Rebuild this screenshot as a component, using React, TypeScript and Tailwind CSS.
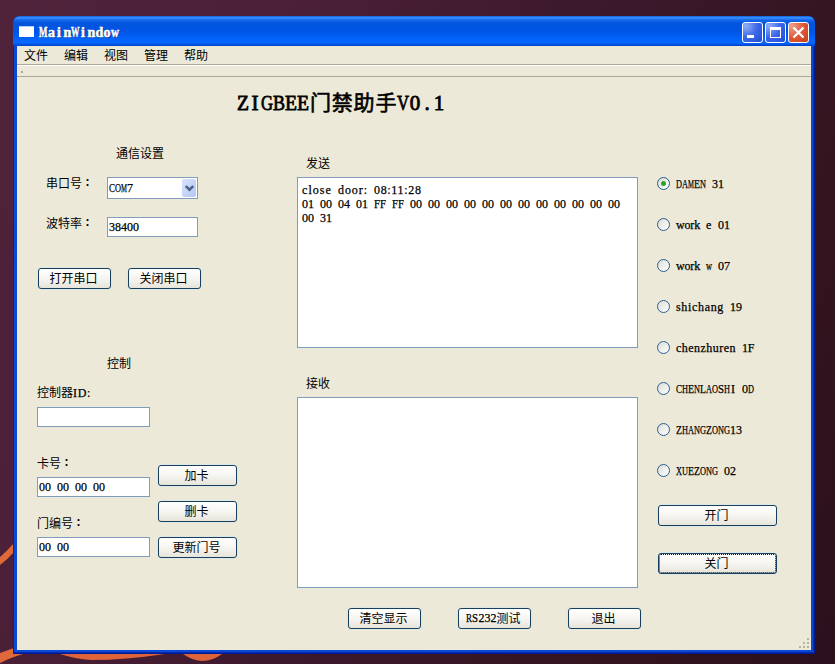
import React, { Fragment } from "react";

const SONG = "font-['Noto_Sans_CJK_SC',sans-serif]";

// Advance widths of the serif face, in em.
const ADVANCE: Record<string, number> = {
  A: 0.722, B: 0.667, C: 0.667, D: 0.722, E: 0.611, F: 0.556, G: 0.722, H: 0.722, I: 0.333, L: 0.611,
  M: 0.889, N: 0.722, O: 0.722, R: 0.667, S: 0.556, U: 0.722, V: 0.722, W: 0.944, X: 0.722, Z: 0.611,
  a: 0.444, c: 0.444, e: 0.444, g: 0.5, i: 0.278, l: 0.278, r: 0.333, s: 0.389, w: 0.722, z: 0.444,
  ":": 0.278, ".": 0.25,
};

// Letters on a fixed grid; wide ones are condensed, narrow ones centred.
function Cells({ text, cell, size }: { text: string; cell: number; size: number }) {
  return (
    <>
      {[...text].map((ch, i) => {
        const natural = (ADVANCE[ch] ?? 0.5) * size;
        const scale = Math.min(1, cell / natural);
        return (
          <span
            key={i}
            className="inline-block origin-left whitespace-nowrap"
            style={{
              width: cell,
              transform: scale < 1 ? `scaleX(${scale})` : undefined,
              textIndent: scale < 1 ? 0 : (cell - natural) / 2,
            }}
          >
            {ch}
          </span>
        );
      })}
    </>
  );
}

// A word whose letters share one 6px grid.
function Word({ text }: { text: string }) {
  const natural = [...text].reduce((sum, ch) => sum + (ADVANCE[ch] ?? 0.5) * 12, 0);
  const target = text.length * 6;
  if (natural > target + 0.8) return <Cells text={text} cell={6} size={12} />;
  return (
    <span
      className="inline-block whitespace-nowrap"
      style={{ width: target, letterSpacing: (target - natural) / text.length }}
    >
      {text}
    </span>
  );
}

function Latin({ text }: { text: string }) {
  return (
    <span className="font-['Liberation_Serif',serif] text-[12px] [-webkit-text-stroke:0.25px_black] [word-spacing:3px]">
      {text.split(" ").map((w, i) => (
        <Fragment key={i}>
          {i > 0 && " "}
          <Word text={w} />
        </Fragment>
      ))}
    </span>
  );
}

function Label({ children, colon, className = "" }: { children: React.ReactNode; colon?: boolean; className?: string }) {
  return (
    <div className={`flex h-5 items-center whitespace-nowrap pb-px leading-[19px] ${className}`}>
      <span>{children}</span>
      {colon && <span className="font-['Noto_Sans_CJK_TC',sans-serif] text-[11px] font-bold">：</span>}
    </div>
  );
}

function Button({ children, className, focused }: { children: React.ReactNode; className: string; focused?: boolean }) {
  return (
    <button
      className={`flex h-[21px] shrink-0 items-center justify-center whitespace-nowrap rounded-[3px] border border-[#17405f] bg-gradient-to-b from-white via-[#f6f5f1] to-[#e6e4da] pb-px pr-[2px] leading-[18px] shadow-[0_0_0_1px_#dfe7e3] ${className}`}
    >
      {children}
      {focused && (
        <span className="pointer-events-none absolute inset-0 rounded-[2px] border border-dotted border-[#07203c]" />
      )}
    </button>
  );
}

function Field({ text, className }: { text: string; className: string }) {
  return (
    <div className={`flex h-5 items-center border border-[#7f9db9] bg-white pl-px leading-[18px] ${className}`}>
      <Latin text={text} />
    </div>
  );
}

function Radio({ text, checked }: { text: string; checked?: boolean }) {
  return (
    <div className="flex h-[41px] items-center">
      <span className="flex size-[13px] items-center justify-center rounded-full border border-[#2f5f8b] bg-gradient-to-br from-[#dcdcd6] to-white">
        {checked && <span className="size-[5px] rounded-full bg-[#2ba528]" />}
      </span>
      <span className="ml-[6px] leading-4">
        <Latin text={text} />
      </span>
    </div>
  );
}

const CAPTION = "size-[21px] shrink-0 rounded-[3px] border border-white";

function TitleBar() {
  return (
    <div className="flex h-[30px] items-center rounded-t-[7px] bg-[linear-gradient(#0a5fe0_0%,#3c93ff_6%,#1468ea_13%,#0355dd_24%,#0054e3_50%,#0262fb_75%,#0468ff_88%,#0050df_96%,#003fc2_100%)] pl-[6px] pr-[6px]">
      <div className="h-[11px] w-[15px] border-t border-[#a9d4ec] bg-white" />
      <span className="ml-[5px] mt-[3px] whitespace-nowrap font-['Liberation_Serif',serif] text-[14px] font-bold leading-4 text-white [-webkit-text-stroke:0.5px_white] [text-shadow:1px_1px_#0a2a80]">
        <Cells text="MainWindow" cell={8} size={14} />
      </span>
      <div className="ml-auto mt-[3px] flex gap-[2px]">
        <svg className={`${CAPTION} bg-[radial-gradient(circle_at_15%_15%,#93aef6,#3c68e8_50%,#1c4bd8)]`} viewBox="0 0 19 19">
          <rect x="4" y="12" width="7" height="3" fill="#fff" />
        </svg>
        <svg className={`${CAPTION} bg-[radial-gradient(circle_at_15%_15%,#93aef6,#3c68e8_50%,#1c4bd8)]`} viewBox="0 0 19 19">
          <path d="M4 4h11v11H4zM5 7v7h9V7z" fill="#fff" fillRule="evenodd" />
        </svg>
        <svg className={`${CAPTION} bg-[radial-gradient(circle_at_15%_15%,#f0a18c,#e05a37_50%,#c93b13)]`} viewBox="0 0 19 19">
          <path d="M4.5 4.5l10 10M14.5 4.5l-10 10" stroke="#fff" strokeWidth="2.3" />
        </svg>
      </div>
    </div>
  );
}

function SettingsPanel() {
  return (
    <div className="w-[280px] shrink-0 pl-5 pt-[14px]">
      <Label className="pl-[79px]">通信设置</Label>
      <div className="mt-[10px] flex h-[30px] items-start">
        <Label colon className="w-[70px] pl-[9px]">串口号</Label>
        <div className="mt-[4px] flex h-[22px] w-[91px] items-center justify-between border border-[#7f9db9] bg-white pl-px pr-px leading-5">
          <Latin text="COM7" />
          <span className="flex h-[18px] w-[14px] items-center justify-center rounded-[2px] bg-gradient-to-br from-[#d8e3fe] to-[#b3c6f5]">
            <svg className="h-[7px] w-[9px]" viewBox="0 0 9 7">
              <path d="M0.8 1l3.7 3.7L8.2 1" fill="none" stroke="#4d6185" strokeWidth="2.4" />
            </svg>
          </span>
        </div>
      </div>
      <div className="mt-[10px] flex h-[24px] items-start">
        <Label colon className="w-[70px] pl-[9px]">波特率</Label>
        <Field text="38400" className="mt-[4px] w-[91px]" />
      </div>
      <div className="mt-[31px] flex gap-[17px] pl-px">
        <Button className="w-[73px]">打开串口</Button>
        <Button className="w-[73px]">关闭串口</Button>
      </div>
      <Label className="mt-[64px] pl-[70px]">控制</Label>
      <Label className="mt-[10px]">
        控制器<Latin text="ID:" />
      </Label>
      <Field text="" className="mt-[4px] w-[113px]" />
      <div className="mt-[26px] flex gap-2">
        <div className="w-[113px]">
          <Label colon>卡号</Label>
          <Field text="00 00 00 00" className="mt-[4px]" />
          <Label colon className="mt-4">门编号</Label>
          <Field text="00 00" className="mt-[4px]" />
        </div>
        <div className="flex flex-col gap-[15px] pt-3">
          <Button className="w-[79px]">加卡</Button>
          <Button className="w-[79px]">删卡</Button>
          <Button className="w-[79px]">更新门号</Button>
        </div>
      </div>
    </div>
  );
}

function LogPanel() {
  return (
    <div className="w-[341px] shrink-0 pt-[24px]">
      <Label className="pl-[9px]">发送</Label>
      <div className="mt-[4px] h-[171px] border border-[#7f9db9] bg-white pl-[4px] pt-[4px] leading-[14px]">
        {["close door: 08:11:28", "01 00 04 01 FF FF 00 00 00 00 00 00 00 00 00 00 00 00", "00 31"].map((line) => (
          <div key={line} className="h-[14px] whitespace-nowrap">
            <Latin text={line} />
          </div>
        ))}
      </div>
      <Label className="mt-[25px] pl-[9px]">接收</Label>
      <div className="mt-[4px] h-[191px] border border-[#7f9db9] bg-white" />
      <div className="mt-5 flex gap-[37px] pl-[51px]">
        <Button className="w-[73px]">清空显示</Button>
        <Button className="w-[73px]">
          <Latin text="RS232" />
          测试
        </Button>
        <Button className="w-[73px]">退出</Button>
      </div>
    </div>
  );
}

const DOORS = ["DAMEN 31", "work e 01", "work w 07", "shichang 19", "chenzhuren 1F", "CHENLAOSHI 0D", "ZHANGZONG13", "XUEZONG 02"];

function DoorPanel() {
  return (
    <div className="ml-[19px] w-[140px] pt-[34px]">
      {DOORS.map((door, i) => (
        <Radio key={door} text={door} checked={i === 0} />
      ))}
      <Button className="ml-px mt-[14px] w-[119px]">开门</Button>
      <Button className="relative ml-px mt-[27px] w-[119px]" focused>
        关门
      </Button>
    </div>
  );
}

export default function App() {
  return (
    <div className={`relative h-[664px] w-[835px] overflow-hidden bg-[linear-gradient(115deg,#50233b_0%,#4b2038_25%,#3b182b_55%,#34141f_80%,#2a101d_100%)] pl-[13px] pt-4 text-[12px] text-black ${SONG}`}>
      <svg className="absolute left-0 top-0" width="835" height="664" viewBox="0 0 835 664">
        <path d="M0 557Q7 551 14 543V552Q7 560 0 565Z" fill="#e0693a" />
        <path d="M0 653L14 648V653H27Q14 656 0 663Z" fill="#e0683a" />
        <path d="M60 654Q75 659 91 660Q125 660 165 654Z" fill="#df633a" />
        <path d="M183 654Q203 668 222 654Z" fill="#df633a" />
      </svg>
      <div className="relative h-[638px] w-[802px] rounded-t-[7px] bg-[#0a49d6] shadow-[inset_1px_0_#0a1fae,inset_-1px_0_#001a86,inset_-2px_0_#0630bb,inset_0_-1px_#001a90,inset_0_-2px_#0628b4]">
        <TitleBar />
        <div className="mx-[4px] h-[604px] bg-[#ece9d8]">
          <div className="flex h-[18px] items-center gap-4 pb-px pl-[7px] leading-[17px]">
            {["文件", "编辑", "视图", "管理", "帮助"].map((m) => (
              <span key={m}>{m}</span>
            ))}
          </div>
          <div className="flex h-[13px] items-center border-y border-[#aca899] pl-[4px] shadow-[inset_0_1px_white]">
            <span className="mt-[3px] size-[2px] bg-[#aca899]" />
          </div>
          <h1 className="flex h-[52px] items-center whitespace-nowrap pb-[2px] pl-[220px] text-[21px] leading-[50px]">
            <span className="w-[73px] pt-[2px] font-['Liberation_Serif',serif] [-webkit-text-stroke:0.8px_black]">
              <Cells text="ZIGBEE" cell={12} size={21} />
            </span>
            <span className="w-[87px] pb-[2px] font-normal tracking-[0.8px] [-webkit-text-stroke:0.6px_black]">门禁助手</span>
            <span className="pt-[2px] font-['Liberation_Serif',serif] [-webkit-text-stroke:0.8px_black]">
              <Cells text="V0.1" cell={12} size={21} />
            </span>
          </h1>
          <div className="flex">
            <SettingsPanel />
            <LogPanel />
            <DoorPanel />
          </div>
        </div>
        <svg className="absolute bottom-[5px] right-[5px]" width="11" height="11" viewBox="0 0 11 11" fill="#b8b4a2">
          <path d="M8 0h2v2H8zM4 4h2v2H4zM8 4h2v2H8zM0 8h2v2H0zM4 8h2v2H4zM8 8h2v2H8z" />
        </svg>
      </div>
    </div>
  );
}
